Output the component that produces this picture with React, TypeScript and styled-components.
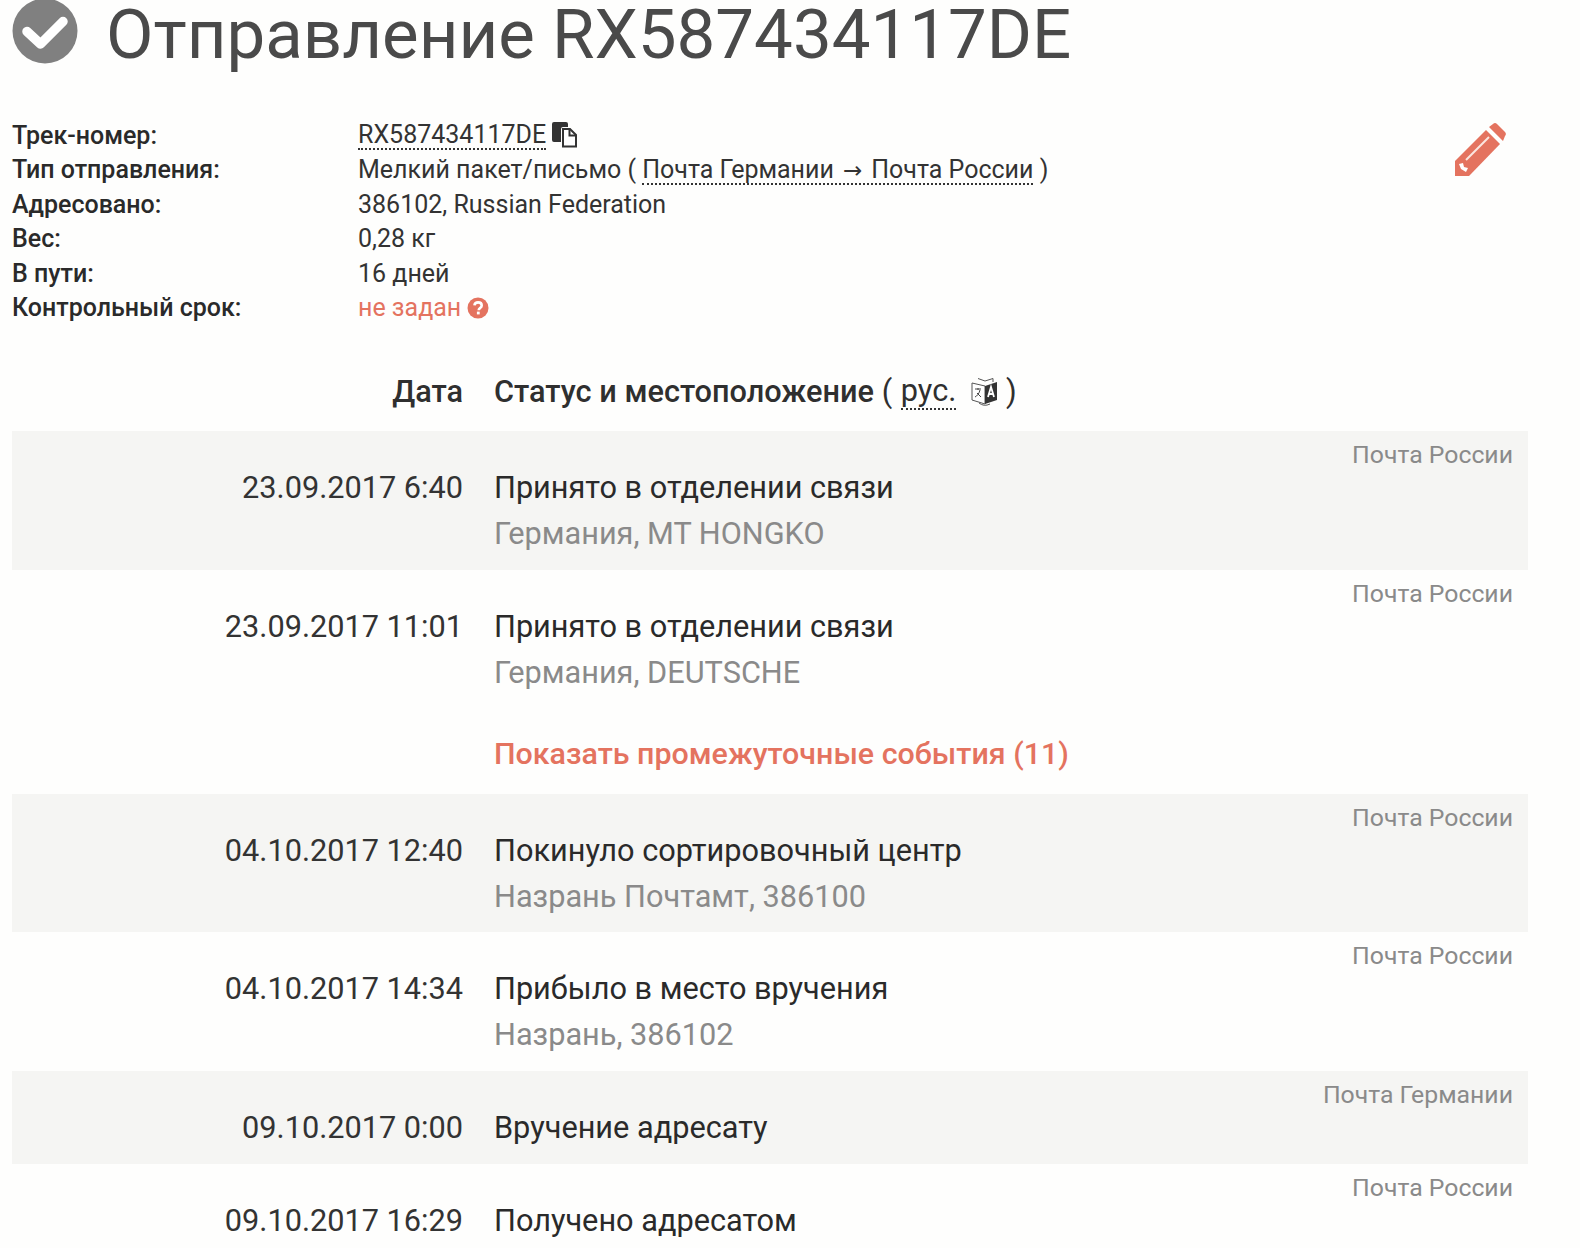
import React from "react";
import styled, { createGlobalStyle } from "styled-components";

const Global = createGlobalStyle`
  html, body { margin: 0; padding: 0; background: #fefefd; }
  body { font-family: Roboto, "Liberation Sans", sans-serif; color: #2f2f2f; }
`;

const Page = styled.div`
  width: 1580px;
  height: 1248px;
  overflow: hidden;
  box-sizing: border-box;
  padding: 0 52px 0 12px;
`;

const Title = styled.h1`
  display: flex;
  align-items: flex-start;
  gap: 28px;
  margin: 0;
  height: 70px;
  font-size: 69px;
  line-height: 70px;
  font-weight: 400;
  color: #4a4a4a;
  white-space: nowrap;
`;

const Info = styled.div`
  position: relative;
  margin-top: 48.5px;
  display: grid;
  grid-template-columns: 346px 1fr;
  grid-auto-rows: 34.5px;
  font-size: 25px;
  line-height: 34.5px;
`;

const Label = styled.div`
  font-weight: 500;
  color: #2a2a2a;
`;

const Value = styled.div`
  display: flex;
  align-items: center;
  color: ${(p: { $accent?: boolean }) => (p.$accent ? "#e4735f" : "#333")};
  white-space: pre;
`;

const Dotted = styled.span`
  border-bottom: 2px dotted #333;
  line-height: 27px;
`;

const Arrow = styled.span`
  display: inline-block;
  width: 25px;
  text-align: center;
  font-family: "DejaVu Sans", sans-serif;
  font-size: 23px;
  line-height: 20px;
`;

const EditIcon = styled.svg`
  position: absolute;
  right: 20px;
  top: 4px;
  width: 55px;
  height: 54px;
`;

const Head = styled.div`
  display: grid;
  grid-template-columns: 451px 1fr;
  column-gap: 31px;
  margin-top: 48.5px;
  height: 57px;
  font-size: 30.7px;
  line-height: 36px;
  font-weight: 500;
  color: #2f2f2f;
`;

const HeadDate = styled.div`
  text-align: right;
`;

const HeadStatus = styled.div`
  display: flex;
  align-items: center;
  height: 36px;
  white-space: pre;
`;

const Plain = styled.span`
  font-weight: 400;
`;

const Closing = styled(Plain)`
  margin-left: -2px;
`;

const Lang = styled.span`
  font-weight: 400;
  border-bottom: 2px dotted #333;
  line-height: 34px;
  margin-left: 1px;
  margin-right: 14px;
`;

type RowProps = { $single?: boolean; $more?: boolean; $odd?: boolean };

const Row = styled.div<RowProps>`
  position: relative;
  display: grid;
  grid-template-columns: 451px 1fr;
  column-gap: 31px;
  box-sizing: border-box;
  padding-top: 39px;
  padding-bottom: ${(p) => (p.$single ? "18px" : p.$more ? "22px" : "17.67px")};
  background: ${(p) => (p.$odd ? "#f5f5f3" : "transparent")};
`;

const Carrier = styled.div`
  position: absolute;
  top: 8px;
  right: 15px;
  font-size: 24.8px;
  line-height: 32px;
  color: #8a8a8a;
`;

const DateCell = styled.div`
  text-align: right;
  font-size: 30.7px;
  line-height: 36px;
  color: #333;
  white-space: nowrap;
`;

const StatusCell = styled.div`
  display: flex;
  flex-direction: column;
  font-size: 30.7px;
  line-height: 36px;
  color: #2a2a2a;
`;

const Place = styled.div`
  margin-top: 10px;
  color: #8a8a8a;
`;

const More = styled.div`
  margin-top: 45px;
  font-size: 30.4px;
  font-weight: 500;
  color: #e4735f;
`;

const CheckSvg = styled.svg`
  flex: none;
  margin-top: -2px;
`;

const CopySvg = styled.svg`
  margin-left: 5px;
  margin-top: -2px;
`;

const HelpSvg = styled.svg`
  margin-left: 6px;
  margin-top: -1px;
`;

type Ev = { d: string; s: string; p?: string; c: string; more?: string };
const events: Ev[] = [
  { d: "23.09.2017 6:40", s: "Принято в отделении связи", p: "Германия, MT HONGKO", c: "Почта России" },
  { d: "23.09.2017 11:01", s: "Принято в отделении связи", p: "Германия, DEUTSCHE", c: "Почта России", more: "Показать промежуточные события (11)" },
  { d: "04.10.2017 12:40", s: "Покинуло сортировочный центр", p: "Назрань Почтамт, 386100", c: "Почта России" },
  { d: "04.10.2017 14:34", s: "Прибыло в место вручения", p: "Назрань, 386102", c: "Почта России" },
  { d: "09.10.2017 0:00", s: "Вручение адресату", c: "Почта Германии" },
  { d: "09.10.2017 16:29", s: "Получено адресатом", c: "Почта России" },
];

const CheckCircle = () => (
  <CheckSvg width="66" height="66" viewBox="0 0 66 66" aria-hidden>
    <circle cx="33" cy="33" r="32.5" fill="#808080" />
    <path d="M15 33.5 L28.5 46 L51 23.5" fill="none" stroke="#fff" strokeWidth="9.5" strokeLinecap="round" strokeLinejoin="round" />
  </CheckSvg>
);

const CopyIcon = () => (
  <CopySvg width="26" height="27" viewBox="0 0 26 27" aria-hidden>
    <path d="M3 1h12a2 2 0 0 1 2 2v3h-5a2 2 0 0 0-2 2v13H3a2 2 0 0 1-2-2V3a2 2 0 0 1 2-2z" fill="#333" />
    <path d="M12 8h7l6 6v11.5H12z" fill="#fff" stroke="#333" strokeWidth="2" />
    <path d="M18.5 8v6.5h6.5" fill="none" stroke="#333" strokeWidth="2" />
  </CopySvg>
);

const HelpIcon = () => (
  <HelpSvg width="22" height="22" viewBox="0 0 22 22" aria-hidden>
    <circle cx="11" cy="11" r="10.5" fill="#e4735f" />
    <path d="M7.4 8.4c.3-2 1.8-3 3.7-3 2 0 3.6 1.2 3.6 3 0 2.6-3 2.6-3 4.8" fill="none" stroke="#fff" strokeWidth="2.6" />
    <rect x="9.9" y="14.6" width="2.8" height="2.8" fill="#fff" />
  </HelpSvg>
);

const TranslateIcon = () => (
  <svg width="30" height="30" viewBox="0 0 30 30" aria-hidden>
    <path d="M2 6 L15 9 V27 L2 23z" fill="#fff" stroke="#555" strokeWidth="1" />
    <path d="M15 9 L27 5 V23 L15 27z" fill="#333" />
    <path d="M8 1.5 L15 4 L23 1.5 V5" fill="none" stroke="#555" strokeWidth="1" />
    <path d="M5 12h6M8 11v2M10 13c-1 4-3 6-5 7M7 16l4 4" fill="none" stroke="#444" strokeWidth="1" />
    <path d="M18 20 L21 10 L24 20 M19 17h4" fill="none" stroke="#fff" strokeWidth="1.8" />
    <path d="M9 26 Q14 30 20 27" fill="none" stroke="#555" strokeWidth="1" />
  </svg>
);

export default function App() {
  return (
    <Page>
      <Global />
      <Title>
        <CheckCircle />
        <span>Отправление RX587434117DE</span>
      </Title>
      <Info>
        <Label>Трек-номер:</Label>
        <Value><Dotted>RX587434117DE</Dotted><CopyIcon /></Value>
        <Label>Тип отправления:</Label>
        <Value>Мелкий пакет/письмо ( <Dotted>Почта Германии <Arrow>→</Arrow> Почта России</Dotted> )</Value>
        <Label>Адресовано:</Label>
        <Value>386102, Russian Federation</Value>
        <Label>Вес:</Label>
        <Value>0,28 кг</Value>
        <Label>В пути:</Label>
        <Value>16 дней</Value>
        <Label>Контрольный срок:</Label>
        <Value $accent>не задан<HelpIcon /></Value>
        <EditIcon viewBox="0 0 55 54" aria-hidden>
          <path d="M2 53 V38 L33 7 L47 21 L16 53z" fill="#e4735f" />
          <path d="M36 4 L40 1 a3 3 0 0 1 4 0 L52 9 a3 3 0 0 1 0 4 L50 18z" fill="#e4735f" />
          <path d="M13 37 L36 14" stroke="#fbe6e0" strokeWidth="2" />
          <path d="M6 41 L10 40 L11 44 L15 45 L13 49 L8 46z" fill="#fff" />
        </EditIcon>
      </Info>
      <Head>
        <HeadDate>Дата</HeadDate>
        <HeadStatus>Статус и местоположение <Plain>( </Plain><Lang>рус.</Lang><TranslateIcon /><Closing> )</Closing></HeadStatus>
      </Head>
      {events.map((e, i) => (
        <Row key={e.d} $odd={i % 2 === 0} $single={!e.p} $more={!!e.more}>
          <Carrier>{e.c}</Carrier>
          <DateCell>{e.d}</DateCell>
          <StatusCell>
            <div>{e.s}</div>
            {e.p && <Place>{e.p}</Place>}
            {e.more && <More>{e.more}</More>}
          </StatusCell>
        </Row>
      ))}
    </Page>
  );
}
